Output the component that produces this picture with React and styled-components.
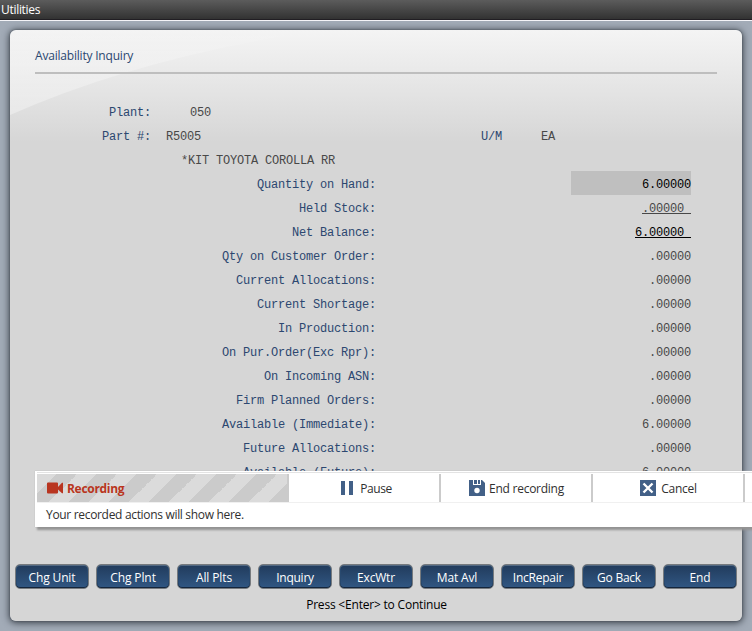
import React from "react";
import styled, { createGlobalStyle } from "styled-components";

const GlobalStyle = createGlobalStyle`
  * { box-sizing: border-box; }
  html, body { margin: 0; overflow: hidden; }
  body { font: 12px/16px "Open Sans", "Noto Sans", sans-serif; }
`;

const Screen = styled.div`
  position: relative;
  width: 752px;
  height: 631px;
  overflow: hidden;
  background: #a2abb7;
`;

const TitleBar = styled.header`
  height: 21px;
  padding: 1px 1px 0;
  background: linear-gradient(#5c5c5c, #323232 19px, #211e23 19px, #211e23 20px, #f4f4f8 20px);
  color: #fff;
  letter-spacing: ${(p) => p.$track}px;
  line-height: 18px;
`;

const Panel = styled.main`
  position: relative;
  display: flex;
  flex-direction: column;
  width: 732px;
  height: 591px;
  margin: 9px 0 0 10px;
  border-radius: 6px;
  background: linear-gradient(#f4f4f4 0, #ebebeb 35px, #d6d6d6 112px);
  box-shadow: 0 1px 7px 1px #3d444d, 0 0 2px #50565e;
`;

const Glare = styled.svg`
  position: absolute;
  left: 0;
  top: 0;
  border-top-left-radius: 6px;
`;

const PanelTitle = styled.h1`
  position: relative;
  width: 682px;
  height: 44px;
  margin: 0 0 25px 25px;
  padding-top: 18px;
  border-bottom: 2px solid #bebebe;
  color: #2b4770;
  font-size: 12px;
  font-weight: 400;
  letter-spacing: ${(p) => p.$track}px;
`;

const Form = styled.section`
  position: relative;
  height: 385px;
  overflow: hidden;
  color: #464646;
  font: 12px/28px "Liberation Mono", monospace;
  letter-spacing: -0.2px;
  white-space: pre;
`;

const Row = styled.div`
  display: grid;
  grid-template-columns: ${(p) => p.$columns};
  height: 24px;
`;

const Label = styled.span`
  color: #2c4770;
  text-align: ${(p) => (p.$start ? "left" : "right")};
`;

const Value = styled.span`
  grid-column: ${(p) => p.$column || "auto"};
  height: 24px;
  color: ${(p) => (p.$strong ? "#000" : "#484848")};
  background: ${(p) => (p.$filled ? "#bfbfbf" : "transparent")};
  text-align: ${(p) => (p.$end ? "right" : "left")};
`;

const Underlined = styled.span`
  display: inline-block;
  height: 19px;
  border-bottom: 1px solid currentColor;
  vertical-align: top;
`;

const Actions = styled.nav`
  display: grid;
  grid-template-columns: repeat(9, 74px);
  column-gap: 7px;
  margin: 80px 0 0 5px;
`;

const ActionButton = styled.button`
  height: 25px;
  padding: 3px 0 0;
  border: 1px solid #767a7e;
  border-radius: 5px;
  background: linear-gradient(#213b5c, #315783);
  box-shadow: inset 0 1px #526983, inset 0 -1px #14253c, inset 1px 0 #28496f, inset -1px 0 #28496f;
  color: #fff;
  font: 12px/18px "Open Sans", sans-serif;
  letter-spacing: ${(p) => p.$track}px;
`;

const Hint = styled.p`
  margin: 7px 0 0 1px;
  color: #000;
  line-height: 17px;
  text-align: center;
  letter-spacing: ${(p) => p.$track}px;
`;

const Recorder = styled.aside`
  position: absolute;
  left: 35px;
  top: 471px;
  width: 760px;
  height: 56px;
  border: solid #fff;
  border-width: 1px 0 1px 2px;
  background: #fff;
  box-shadow: 2px 3px 2px #939393, 0 0 1px #aaa;
`;

const RecorderBar = styled.div`
  display: grid;
  grid-template-columns: 252px repeat(3, 152px) 1fr;
  height: 31px;
  border-top: 1px solid #e3e3e3;
  border-bottom: 1px solid #f0f0f0;
  padding-top: 1px;
`;

const Status = styled.div`
  display: flex;
  align-items: center;
  gap: 4px;
  padding-left: 10px;
  border-right: 2px solid #cbcbcb;
  background: linear-gradient(-45deg, #dbdbdb 25%, #cbcbcb 25% 50%, #dbdbdb 50% 75%, #cbcbcb 75%) 20px 0 / 40px 40px;
  color: #b93520;
  font-weight: 700;
  letter-spacing: ${(p) => p.$track}px;
`;

const RecorderAction = styled.div`
  display: flex;
  align-items: center;
  justify-content: center;
  gap: ${(p) => p.$gap}px;
  padding-left: ${(p) => p.$shift || 0}px;
  border-right: 2px solid #cbcbcb;
  color: #303030;
  letter-spacing: ${(p) => p.$track}px;
`;

const ActionName = styled.span`
  padding-top: 2px;
`;

const RecorderMessage = styled.div`
  padding: 4px 9px;
  color: #303030;
  letter-spacing: ${(p) => p.$track}px;
`;

const Icon = styled.svg`
  display: block;
  flex: none;
`;

const CameraIcon = () => (
  <Icon width="16" height="12" fill="#b93520">
    <path d="M1 .5h9q1 0 1 1V5L15 .8h1v10.4h-1L11 7.5v3q0 1-1 1H1q-1 0-1-1v-9q0-1 1-1Z" />
  </Icon>
);

const PauseIcon = () => (
  <Icon width="12" height="14" fill="#426087"><path d="M0 0h4v14H0zM8 0h4v14H8z" /></Icon>
);

const SaveIcon = () => (
  <Icon width="16" height="16">
    <path fill="#426087" d="M0 0h13l3 3v13H0z" />
    <path fill="#fff" d="M4 0h1v4h3V0h1v4h2V0h1v5H4z" />
    <circle cx="8" cy="10.5" r="2.7" fill="#fff" />
  </Icon>
);

const CancelIcon = () => (
  <Icon width="16" height="16">
    <path fill="#426087" d="M0 0h16v16H0z" />
    <path stroke="#fff" strokeWidth="2.4" d="m3.5 3.5 9 9M12.5 3.5l-9 9" />
  </Icon>
);

const quantities = [
  ["Quantity on Hand:", "6.00000", "filled"],
  ["Held Stock:", ".00000 ", "underlined"],
  ["Net Balance:", "6.00000 ", "total"],
  ["Qty on Customer Order:", ".00000"],
  ["Current Allocations:", ".00000"],
  ["Current Shortage:", ".00000"],
  ["In Production:", ".00000"],
  ["On Pur.Order(Exc Rpr):", ".00000"],
  ["On Incoming ASN:", ".00000"],
  ["Firm Planned Orders:", ".00000"],
  ["Available (Immediate):", "6.00000"],
  ["Future Allocations:", ".00000"],
  ["Available (Future):", "6.00000"],
];

const actions = [
  ["Chg Unit", -0.15], ["Chg Plnt", -0.1], ["All Plts", -0.1],
  ["Inquiry", -0.25], ["ExcWtr", -0.2], ["Mat Avl", -0.15],
  ["IncRepair", -0.25], ["Go Back", -0.25], ["End", -0.2],
];

export default function App() {
  return (
    <Screen>
      <GlobalStyle />
      <TitleBar $track={-0.3}>Utilities</TitleBar>
      <Panel>
        <Glare width="320" height="86">
          <defs>
            <linearGradient id="glare" x2="0" y2="1">
              <stop stopColor="#fff" stopOpacity="0" />
              <stop offset=".4" stopColor="#fff" stopOpacity=".25" />
              <stop offset="1" stopColor="#fff" stopOpacity=".35" />
            </linearGradient>
          </defs>
          <path fill="url(#glare)" d="M0 0H310Q130 27 0 85Z" />
        </Glare>
        <PanelTitle $track={-0.2}>Availability Inquiry</PanelTitle>
        <Form>
          <Row $columns="141px 39px 1fr">
            <Label>Plant:</Label>
            <Value $column={3}>050</Value>
          </Row>
          <Row $columns="141px 15px 315px 60px 1fr">
            <Label>Part #:</Label>
            <Value $column={3}>R5005</Value>
            <Label $start>U/M</Label>
            <Value>EA</Value>
          </Row>
          <Row $columns="171px 1fr">
            <Value $column={2}>*KIT TOYOTA COROLLA RR</Value>
          </Row>
          {quantities.map(([label, value, kind]) => (
            <Row key={label} $columns="366px 195px 120px">
              <Label>{label}</Label>
              <Value $column={3} $end $filled={kind === "filled"} $strong={kind === "filled" || kind === "total"}>
                {kind === "underlined" || kind === "total" ? <Underlined>{value}</Underlined> : value}
              </Value>
            </Row>
          ))}
        </Form>
        <Actions>
          {actions.map(([name, track]) => <ActionButton key={name} $track={track}>{name}</ActionButton>)}
        </Actions>
        <Hint $track={-0.2}>Press &lt;Enter&gt; to Continue</Hint>
      </Panel>
      <Recorder>
        <RecorderBar>
          <Status $track={-0.3}><CameraIcon /><ActionName>Recording</ActionName></Status>
          <RecorderAction $gap={7} $shift={5} $track={-0.4}><PauseIcon /><ActionName>Pause</ActionName></RecorderAction>
          <RecorderAction $gap={4} $shift={1} $track={-0.25}><SaveIcon /><ActionName>End recording</ActionName></RecorderAction>
          <RecorderAction $gap={5} $shift={1} $track={-0.25}><CancelIcon /><ActionName>Cancel</ActionName></RecorderAction>
        </RecorderBar>
        <RecorderMessage $track={-0.32}>Your recorded actions will show here.</RecorderMessage>
      </Recorder>
    </Screen>
  );
}
